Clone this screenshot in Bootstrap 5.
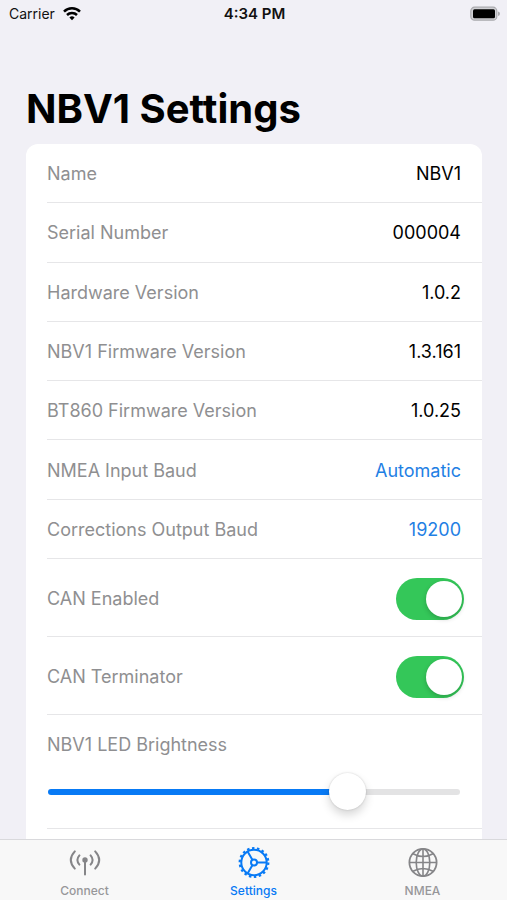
<!DOCTYPE html>
<html lang="en">
<head>
<meta charset="utf-8">
<meta name="viewport" content="width=device-width, initial-scale=1">
<title>NBV1 Settings</title>
<link href="https://cdn.jsdelivr.net/npm/bootstrap@5.3.0/dist/css/bootstrap.min.css" rel="stylesheet">
<style>
  body { font-family: Inter, "Liberation Sans", sans-serif; background: #f1f0f6; color: #000; font-size: 18px; line-height: 24px; }
  .status-bar { display: grid; grid-template-columns: 1fr auto 1fr; height: 28px; padding: 0 7px 0 9px; font-size: 14px; color: #111; }
  .status-bar time { font-size: 15px; }
  .page-title { font-size: 40px; line-height: 48px; font-weight: 700; margin: 57px 26px 11px; }
  .panel { background: #fff; margin: 0 25px 0 26px; border-radius: 12px 12px 0 0; }
  .info-rows { display: grid; grid-auto-rows: 1fr; min-height: 415px; }
  .setting { margin-left: 21px; padding-top: 2px; padding-right: 21px; border-bottom: 1px solid #e6e6e8; }
  .setting-toggle { min-height: 78px; padding-right: 18px; }
  .setting-slider { padding: 18px 21px 17px 0; }
  .caption { color: #8f8f91; }
  .picker { color: #1f80e4; font-size: 18px; line-height: 24px; }
  .form-check-input.toggle { width: 68px; height: 42px; margin: 0; border: 0; border-radius: 21px; position: relative; background: #34c759; box-shadow: none; cursor: pointer; }
  .toggle::after { content: ""; position: absolute; top: 3px; left: 3px; width: 36px; height: 36px; border-radius: 50%; background: #fff; box-shadow: 0 2px 5px rgba(0,0,0,.2); }
  .form-check-input.toggle:checked { background: #34c759; }
  .form-check-input.toggle:not(:checked) { background: #e4e4e6; }
  .toggle:checked::after { left: auto; right: 2px; }
  .level { -webkit-appearance: none; appearance: none; display: block; width: 100%; height: 38px; margin: 16px 0 0; padding: 0 1px; background: transparent; }
  .level::-webkit-slider-runnable-track { height: 6px; border-radius: 3px; background: linear-gradient(to right, #087af5 72%, #e3e3e4 72%); }
  .level::-webkit-slider-thumb { -webkit-appearance: none; width: 37px; height: 37px; margin-top: -16px; border: 0; border-radius: 50%; background: #fff; box-shadow: 0 0 2px rgba(0,0,0,.18), 0 5px 10px rgba(0,0,0,.16); }
  .tabs { background: #f8f8f8; border-top: 1px solid #d9d9dc; height: 61px; z-index: 2; }
  .tab { color: #97979a; font-size: 12px; line-height: 16px; font-weight: 500; padding-top: 6px; }
  .tab svg { width: 34px; height: 34px; margin-bottom: 3px; }
  .tab-current { color: #087af5; }
</style>
<script src="https://cdn.jsdelivr.net/npm/bootstrap@5.3.0/dist/js/bootstrap.bundle.min.js"></script>
</head>
<body class="d-flex flex-column min-vh-100">
<header class="status-bar align-items-center">
  <div class="d-flex align-items-center gap-2">
    <span>Carrier</span>
    <svg width="18" height="14" viewBox="0 0 18 14" fill="none" stroke="#000" stroke-width="2.5" role="img" aria-label="Wi-Fi"><path d="M1 4.6a11.4 11.4 0 0 1 16 0M4 8a7.1 7.1 0 0 1 10 0"/><path d="M6.4 10.5a3.8 3.8 0 0 1 5.2 0L9 13.2z" fill="#000" stroke="none"/></svg>
  </div>
  <time class="fw-semibold">4:34 PM</time>
  <svg class="ms-auto" width="30" height="16" viewBox="0 0 30 16" role="img" aria-label="Battery full"><rect x=".8" y="1.2" width="26" height="13" rx="3.8" fill="#d0d0d4" stroke="#aaaaae" stroke-width="1.2"/><rect x="3" y="3.3" width="22" height="9" rx="1.5" fill="#000"/><path d="M28 5.5q2 .5 2 2.2t-2 2.2z" fill="#aaaaae"/></svg>
</header>
<main class="flex-grow-1 d-flex flex-column">
  <h1 class="page-title">NBV1 Settings</h1>
  <section class="panel flex-grow-1">
    <div class="info-rows">
      <div class="setting d-flex align-items-center justify-content-between"><span class="caption">Name</span><span>NBV1</span></div>
      <div class="setting d-flex align-items-center justify-content-between"><span class="caption">Serial Number</span><span>000004</span></div>
      <div class="setting d-flex align-items-center justify-content-between"><span class="caption">Hardware Version</span><span>1.0.2</span></div>
      <div class="setting d-flex align-items-center justify-content-between"><span class="caption">NBV1 Firmware Version</span><span>1.3.161</span></div>
      <div class="setting d-flex align-items-center justify-content-between"><span class="caption">BT860 Firmware Version</span><span>1.0.25</span></div>
      <div class="setting d-flex align-items-center justify-content-between"><span class="caption" id="input-baud">NMEA Input Baud</span><button type="button" class="picker btn btn-link text-decoration-none p-0 border-0" id="input-value" aria-labelledby="input-baud input-value">Automatic</button></div>
      <div class="setting d-flex align-items-center justify-content-between"><span class="caption" id="output-baud">Corrections Output Baud</span><button type="button" class="picker btn btn-link text-decoration-none p-0 border-0" id="output-value" aria-labelledby="output-baud output-value">19200</button></div>
    </div>
    <div class="setting setting-toggle d-flex align-items-center justify-content-between"><label class="caption" for="can-enabled">CAN Enabled</label><input class="form-check-input toggle" type="checkbox" role="switch" id="can-enabled" checked></div>
    <div class="setting setting-toggle d-flex align-items-center justify-content-between"><label class="caption" for="can-term">CAN Terminator</label><input class="form-check-input toggle" type="checkbox" role="switch" id="can-term" checked></div>
    <div class="setting setting-slider"><label class="caption d-block" for="brightness">NBV1 LED Brightness</label><input class="level" type="range" id="brightness" min="0" max="100" value="75"></div>
  </section>
</main>
<nav class="tabs sticky-bottom row g-0 text-center" aria-label="Main">
  <a class="tab col d-flex flex-column align-items-center text-decoration-none" href="#connect">
    <svg viewBox="0 0 34 34" fill="none" stroke="#858588" stroke-width="2" stroke-linecap="round" aria-hidden="true"><circle cx="17" cy="14" r="2.7" fill="#858588" stroke="none"/><path d="M17 15v13.6M11.4 9.4q-4 4.6 0 9.2M22.6 9.4q4 4.6 0 9.2M6.8 5.4q-8 8.6 0 17.2M27.2 5.4q8 8.6 0 17.2"/></svg>
    Connect</a>
  <a class="tab tab-current col d-flex flex-column align-items-center text-decoration-none" href="#settings" aria-current="page">
    <svg viewBox="0 0 34 34" fill="none" stroke="currentColor" stroke-width="2" aria-hidden="true"><circle cx="17" cy="16.5" r="12.7"/><circle cx="17" cy="16.5" r="14.3" stroke-width="2.2" stroke-dasharray="2.5 2.4916"/><circle cx="17" cy="16.5" r="3"/><path d="M20 16.5h10M15.5 13.9 10.6 5.5M15.5 19.1 10.6 27.5"/></svg>
    Settings</a>
  <a class="tab col d-flex flex-column align-items-center text-decoration-none" href="#nmea">
    <svg viewBox="0 0 34 34" fill="none" stroke="#858588" stroke-width="1.6" aria-hidden="true"><circle cx="17" cy="16.5" r="13.6" stroke-width="1.8"/><ellipse cx="17" cy="16.5" rx="6.8" ry="13.6"/><path d="M17 2.9v27.2M3.4 16.5h27.2M7 7.7q10 5.6 20 0M7 25.3q10-5.6 20 0"/></svg>
    NMEA</a>
</nav>
</body>
</html>
